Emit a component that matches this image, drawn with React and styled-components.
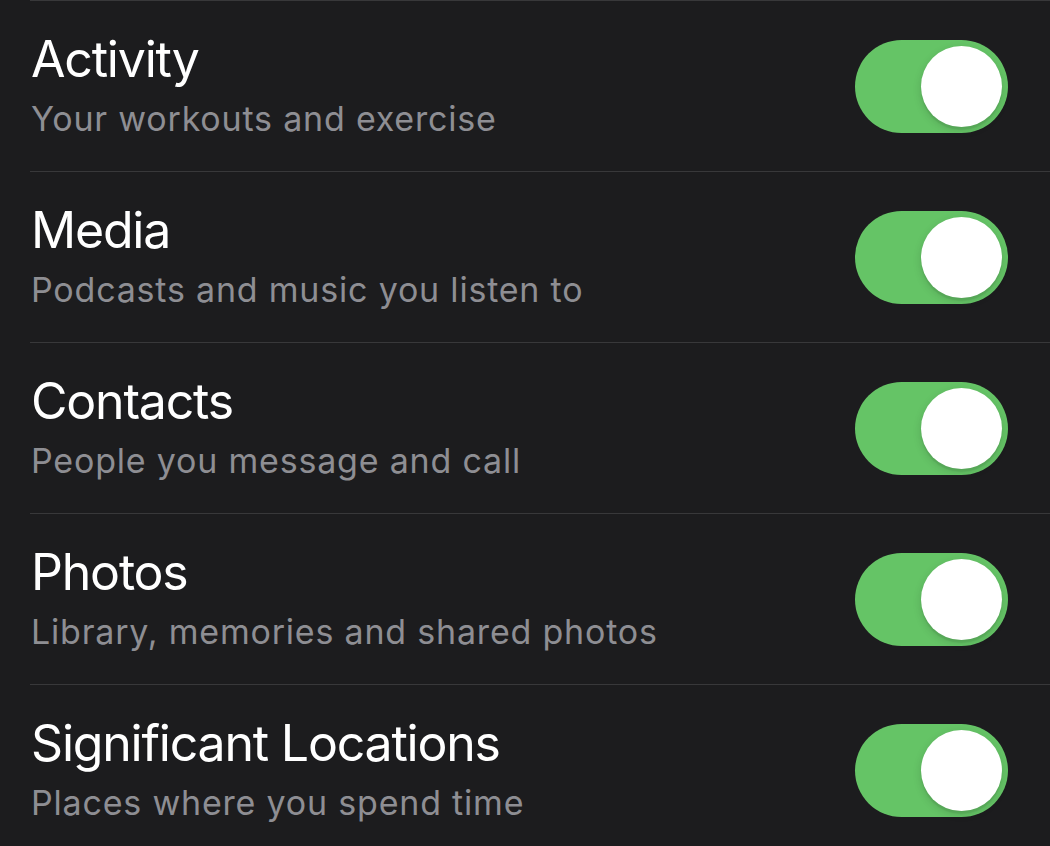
import React from "react";
import styled, { createGlobalStyle } from "styled-components";

const Global = createGlobalStyle`
  html, body {
    margin: 0;
    padding: 0;
    background: #1c1c1e;
  }
  body {
    font-family: Inter, "Liberation Sans", Arial, sans-serif;
    -webkit-font-smoothing: antialiased;
  }
`;

const List = styled.div`
  background: #1c1c1e;
  padding-left: 30px;
  width: 1050px;
  height: 846px;
  overflow: hidden;
  box-sizing: border-box;
`;

const Row = styled.div`
  display: flex;
  align-items: center;
  justify-content: space-between;
  height: 171px;
  box-sizing: border-box;
  border-top: 1px solid #38383a;
  padding: 0 42px 0 1px;
`;

const TextBlock = styled.div`
  display: flex;
  flex-direction: column;
  gap: 8px;
  margin-top: -4px;
`;

const Title = styled.div`
  color: #ffffff;
  font-size: 50px;
  line-height: 62px;
  letter-spacing: -1.2px;
  font-weight: 400;
`;

const Subtitle = styled.div`
  color: #8e8e93;
  font-size: 34px;
  line-height: 42px;
  letter-spacing: 0.8px;
  font-weight: 400;
`;

const Track = styled.div`
  position: relative;
  width: 153px;
  height: 93px;
  border-radius: 47px;
  background: ${(p) => (p.$on ? "#65c466" : "#39393d")};
  flex-shrink: 0;
`;

const Knob = styled.div`
  position: absolute;
  top: 6px;
  left: ${(p) => (p.$on ? "66px" : "6px")};
  width: 81px;
  height: 81px;
  border-radius: 50%;
  background: #ffffff;
  box-shadow: 0 3px 8px rgba(0, 0, 0, 0.15), 0 3px 1px rgba(0, 0, 0, 0.06);
`;

const Toggle = ({ on }) => (
  <Track $on={on}>
    <Knob $on={on} />
  </Track>
);

const items = [
  { title: "Activity", sub: "Your workouts and exercise" },
  { title: "Media", sub: "Podcasts and music you listen to" },
  { title: "Contacts", sub: "People you message and call" },
  { title: "Photos", sub: "Library, memories and shared photos" },
  { title: "Significant Locations", sub: "Places where you spend time" },
];

export default function App() {
  return (
    <>
      <Global />
      <List>
        {items.map((it) => (
          <Row key={it.title}>
            <TextBlock>
              <Title>{it.title}</Title>
              <Subtitle>{it.sub}</Subtitle>
            </TextBlock>
            <Toggle on />
          </Row>
        ))}
      </List>
    </>
  );
}
